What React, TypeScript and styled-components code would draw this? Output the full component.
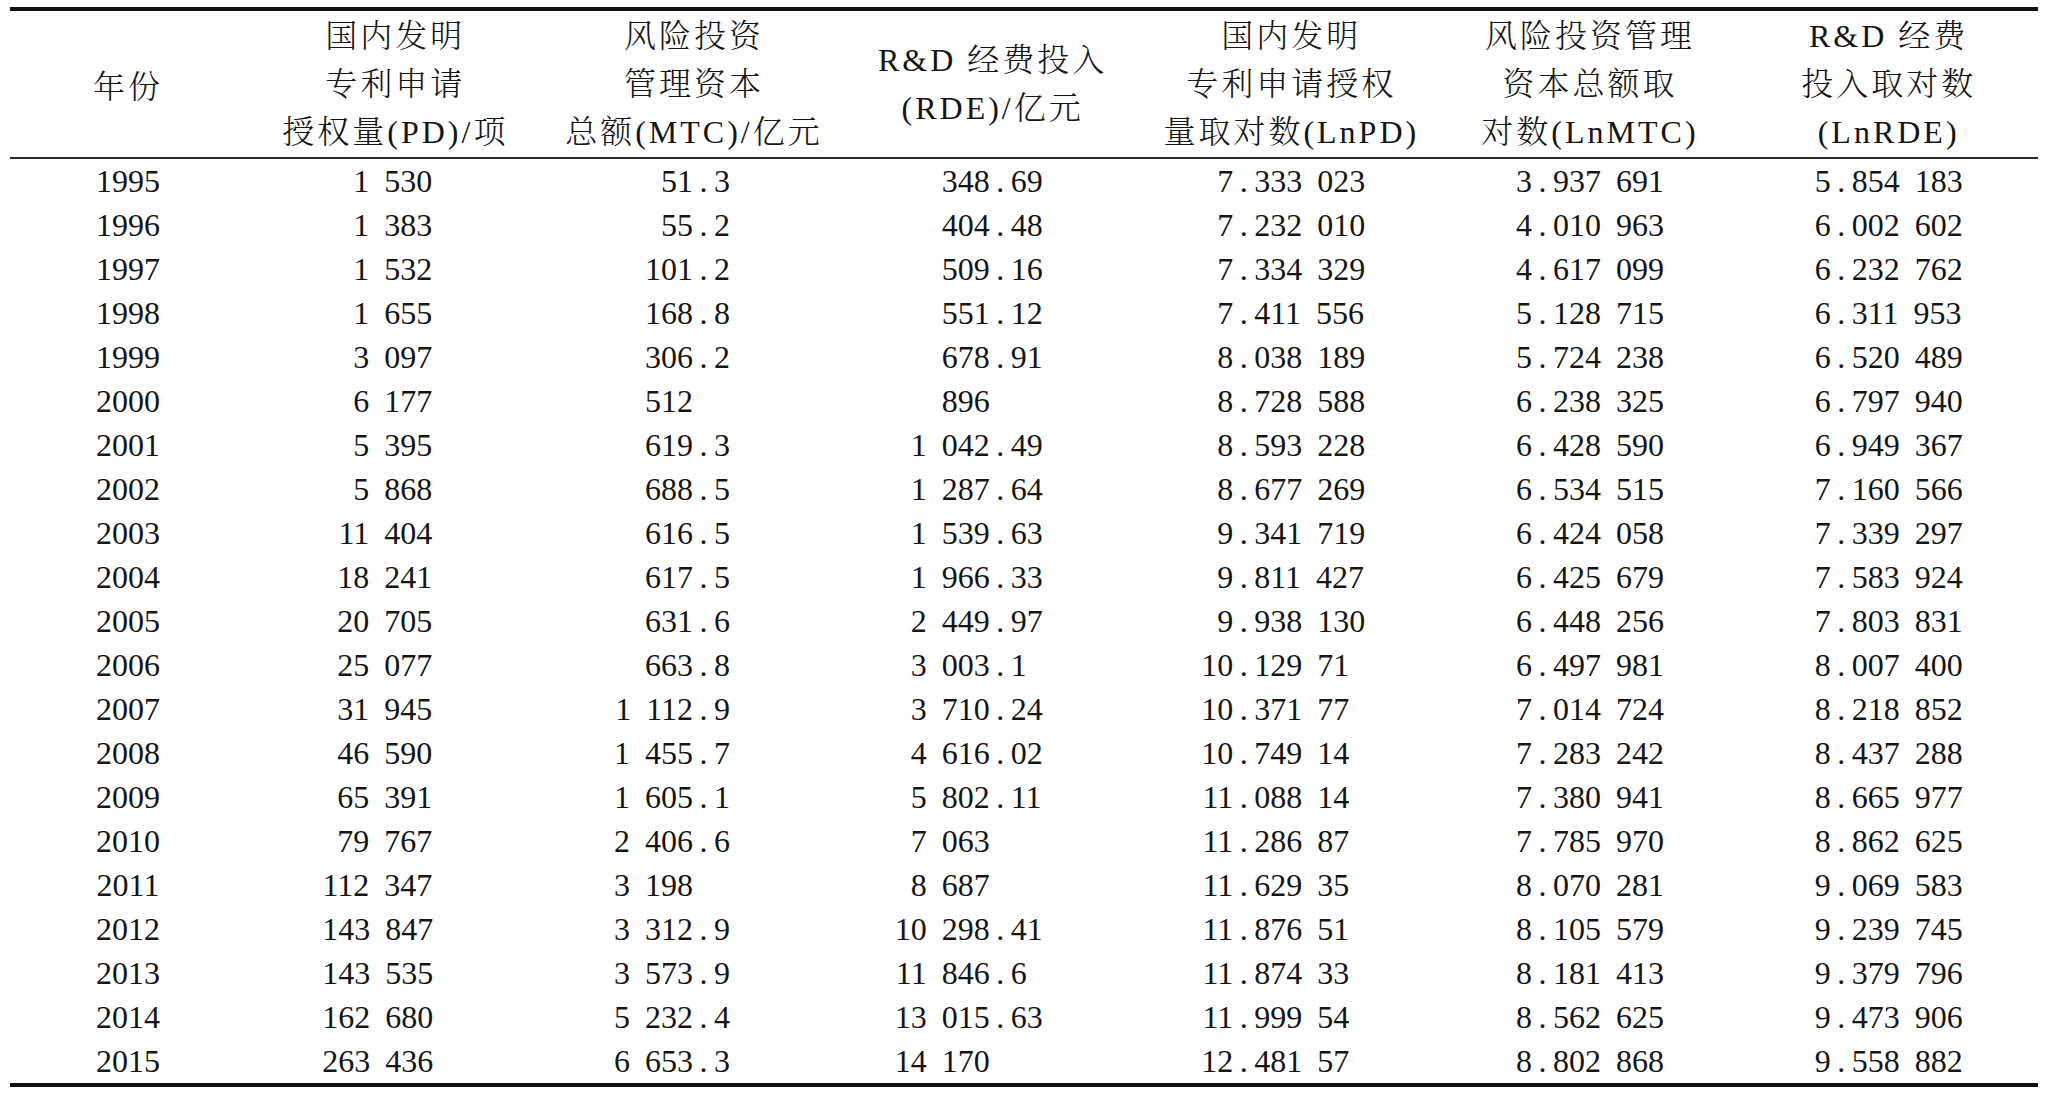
import React from 'react';
import styled, { createGlobalStyle } from 'styled-components';

const GlobalStyle = createGlobalStyle`
  html, body {
    margin: 0;
    padding: 0;
    background: #ffffff;
  }
  body {
    font-family: "Liberation Serif", "Noto Serif CJK SC", "Noto Sans CJK SC", serif;
    color: #151515;
  }
`;

const Page = styled.div`
  width: 2048px;
  height: 1096px;
  padding: 7px 0 0 10px;
  box-sizing: border-box;
  overflow: hidden;
`;

const Table = styled.table`
  width: 2028px;
  table-layout: fixed;
  border-collapse: collapse;
  border-top: 4px solid #111;
  border-bottom: 4px solid #111;
  font-size: 32px;
  font-weight: 300;
`;

const HeadCell = styled.th`
  height: 146px;
  padding: 0;
  font-weight: 300;
  text-align: center;
  vertical-align: middle;
  letter-spacing: 3px;
  border-bottom: 2px solid #2a2a2a;
  white-space: nowrap;
`;

const HeadLine = styled.div`
  line-height: 48px;
`;

const Row = styled.tr`
  height: 44px;
`;

const YearCell = styled.td`
  padding: 0;
  text-align: center;
  line-height: 44px;
`;

const NumCell = styled.td`
  padding: 0;
  line-height: 44px;
`;

const NumBox = styled.div<{ $int: number; $frac: number }>`
  display: grid;
  grid-template-columns: ${({ $int }) => $int}px ${({ $frac }) => $frac}px;
  justify-content: center;
  white-space: nowrap;
  word-spacing: 7px;
`;

const IntPart = styled.span`
  text-align: right;
`;

const FracPart = styled.span`
  text-align: left;
`;

const Dot = styled.span`
  display: inline-block;
  width: 21px;
  text-align: center;
`;

type ColSpec = { int: number; frac: number };

const columns: ColSpec[] = [
  { int: 110, frac: 36 },
  { int: 80, frac: 82 },
  { int: 96, frac: 102 },
  { int: 36, frac: 152 },
  { int: 20, frac: 136 },
  { int: 20, frac: 136 },
];

const headers: string[][] = [
  ['国内发明', '专利申请', '授权量(PD)/项'],
  ['风险投资', '管理资本', '总额(MTC)/亿元'],
  ['R&D 经费投入', '(RDE)/亿元'],
  ['国内发明', '专利申请授权', '量取对数(LnPD)'],
  ['风险投资管理', '资本总额取', '对数(LnMTC)'],
  ['R&D 经费', '投入取对数', '(LnRDE)'],
];

const rows: string[][] = [
  ['1995', '1 530', '51.3', '348.69', '7.333 023', '3.937 691', '5.854 183'],
  ['1996', '1 383', '55.2', '404.48', '7.232 010', '4.010 963', '6.002 602'],
  ['1997', '1 532', '101.2', '509.16', '7.334 329', '4.617 099', '6.232 762'],
  ['1998', '1 655', '168.8', '551.12', '7.411 556', '5.128 715', '6.311 953'],
  ['1999', '3 097', '306.2', '678.91', '8.038 189', '5.724 238', '6.520 489'],
  ['2000', '6 177', '512', '896', '8.728 588', '6.238 325', '6.797 940'],
  ['2001', '5 395', '619.3', '1 042.49', '8.593 228', '6.428 590', '6.949 367'],
  ['2002', '5 868', '688.5', '1 287.64', '8.677 269', '6.534 515', '7.160 566'],
  ['2003', '11 404', '616.5', '1 539.63', '9.341 719', '6.424 058', '7.339 297'],
  ['2004', '18 241', '617.5', '1 966.33', '9.811 427', '6.425 679', '7.583 924'],
  ['2005', '20 705', '631.6', '2 449.97', '9.938 130', '6.448 256', '7.803 831'],
  ['2006', '25 077', '663.8', '3 003.1', '10.129 71', '6.497 981', '8.007 400'],
  ['2007', '31 945', '1 112.9', '3 710.24', '10.371 77', '7.014 724', '8.218 852'],
  ['2008', '46 590', '1 455.7', '4 616.02', '10.749 14', '7.283 242', '8.437 288'],
  ['2009', '65 391', '1 605.1', '5 802.11', '11.088 14', '7.380 941', '8.665 977'],
  ['2010', '79 767', '2 406.6', '7 063', '11.286 87', '7.785 970', '8.862 625'],
  ['2011', '112 347', '3 198', '8 687', '11.629 35', '8.070 281', '9.069 583'],
  ['2012', '143 847', '3 312.9', '10 298.41', '11.876 51', '8.105 579', '9.239 745'],
  ['2013', '143 535', '3 573.9', '11 846.6', '11.874 33', '8.181 413', '9.379 796'],
  ['2014', '162 680', '5 232.4', '13 015.63', '11.999 54', '8.562 625', '9.473 906'],
  ['2015', '263 436', '6 653.3', '14 170', '12.481 57', '8.802 868', '9.558 882'],
];

const Num: React.FC<{ value: string; spec: ColSpec }> = ({ value, spec }) => {
  const [whole, frac] = value.split('.');
  return (
    <NumBox $int={spec.int} $frac={spec.frac}>
      <IntPart>{whole}</IntPart>
      <FracPart>
        {frac !== undefined && (
          <>
            <Dot>.</Dot>
            {frac}
          </>
        )}
      </FracPart>
    </NumBox>
  );
};

const App: React.FC = () => {
  return (
    <Page>
      <GlobalStyle />
      <Table>
        <colgroup>
          <col style={{ width: 236 }} />
          {columns.map((_, i) => (
            <col key={i} style={{ width: 298.67 }} />
          ))}
        </colgroup>
        <thead>
          <tr>
            <HeadCell>年份</HeadCell>
            {headers.map((lines, i) => (
              <HeadCell key={i}>
                {lines.map((line) => (
                  <HeadLine key={line}>{line}</HeadLine>
                ))}
              </HeadCell>
            ))}
          </tr>
        </thead>
        <tbody>
          {rows.map((row) => (
            <Row key={row[0]}>
              <YearCell>{row[0]}</YearCell>
              {row.slice(1).map((v, i) => (
                <NumCell key={i}>
                  <Num value={v} spec={columns[i]} />
                </NumCell>
              ))}
            </Row>
          ))}
        </tbody>
      </Table>
    </Page>
  );
};

export default App;
